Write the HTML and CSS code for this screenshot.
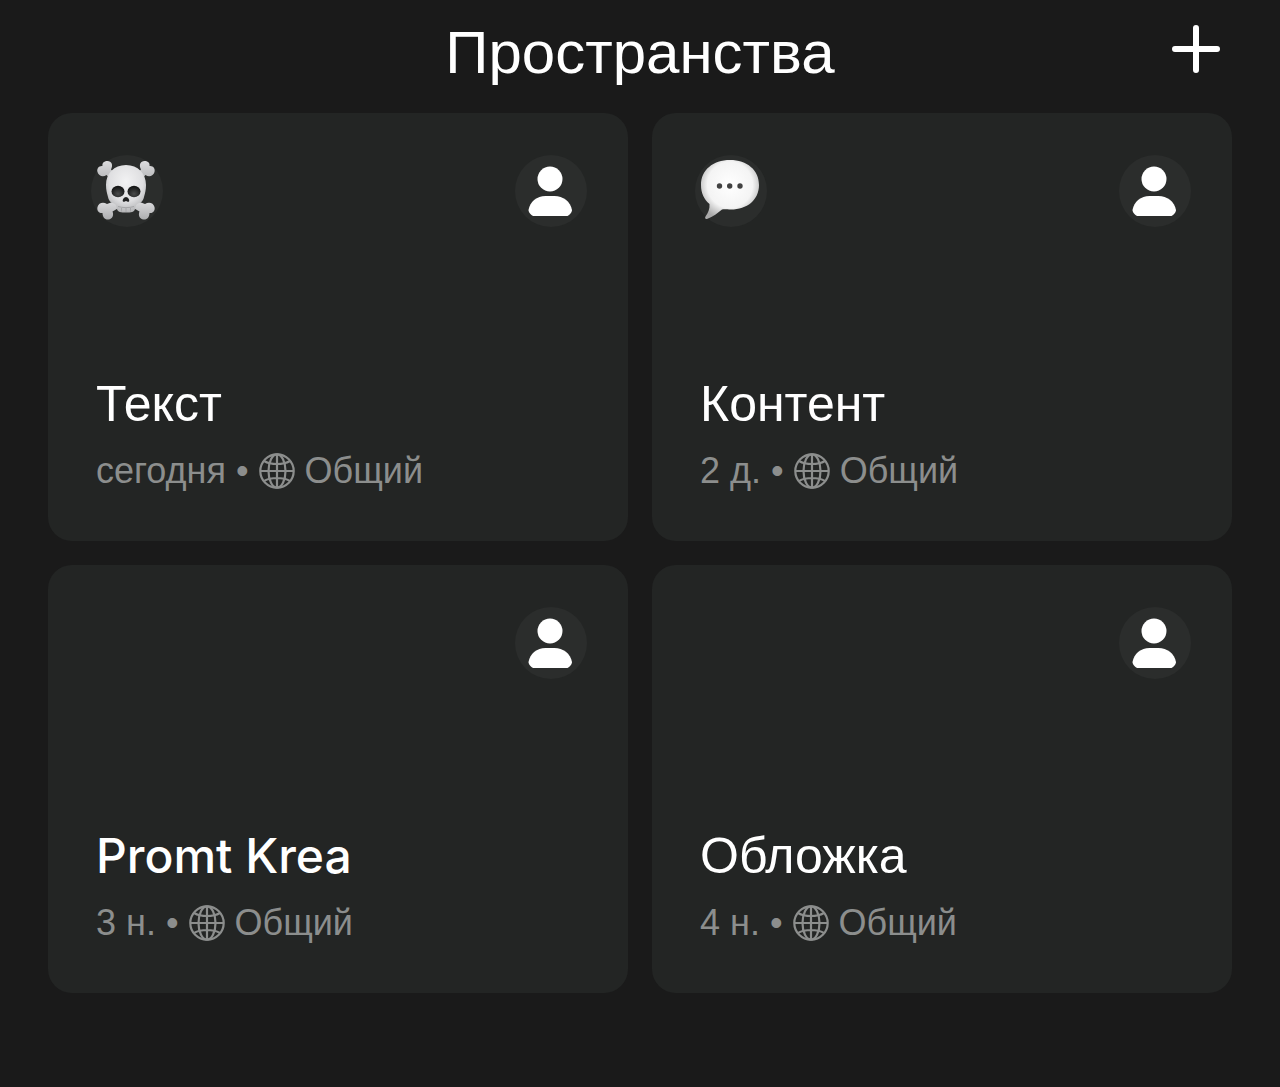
FILE: index.html
```html
<!DOCTYPE html>
<html lang="ru">
<head>
  <meta charset="UTF-8" />
  <meta name="viewport" content="width=device-width, initial-scale=1.0"/>
  <title>Пространства</title>
  <link rel="stylesheet" href="styles.css">
</head>
<body>

  <!-- Shared icons -->
  <svg class="sprite" aria-hidden="true">
    <symbol id="icon-user" viewBox="0 0 72 72">
      <circle cx="35" cy="24" r="12.500"/>
      <path d="M18 61C16 60 13.500 57.500 13.500 55C15 46.500 22 41 30.500 41h9C48 41 55.500 46.500 57 55C57 57.500 54.500 60 52.500 61z"/>
    </symbol>
    <symbol id="icon-globe" viewBox="0 0 36 36">
      <g fill="none" stroke="currentColor" stroke-width="2.200">
        <circle cx="18" cy="18" r="16.700"/>
        <ellipse cx="18" cy="18" rx="8.500" ry="16.700"/>
        <path d="M18 1v34M1 18h34M5 8C12 12 24 12 31 8M5 28C12 24 24 24 31 28"/>
      </g>
    </symbol>
  </svg>

  <header class="header">
    <h1>Пространства</h1>
    <button class="add-btn" type="button" aria-label="Добавить">
      <svg viewBox="0 0 48 48" width="48" height="48">
        <path d="M24 3v42M3 24h42" fill="none" stroke="currentColor" stroke-width="6" stroke-linecap="round"/>
      </svg>
    </button>
  </header>

  <main class="spaces">
    <!-- Text -->
    <a class="card" href="#text">
      <div class="card-top">
        <span class="badge">
          <svg viewBox="0 0 72 72">
            <defs>
              <radialGradient id="skull-fill" cx="0.5" cy="0.35" r="0.7">
                <stop offset="0" stop-color="#f2f2f3"/>
                <stop offset="0.6" stop-color="#dfdfe1"/>
                <stop offset="1" stop-color="#a9aaac"/>
              </radialGradient>
              <radialGradient id="eye-fill" cx="0.5" cy="0.7" r="0.6">
                <stop offset="0" stop-color="#4a4b4b"/>
                <stop offset="1" stop-color="#161717"/>
              </radialGradient>
              <linearGradient id="bone-fill" x1="0" y1="0" x2="0" y2="1">
                <stop offset="0" stop-color="#dcdcde"/>
                <stop offset="1" stop-color="#adaeb0"/>
              </linearGradient>
            </defs>
            <!-- Crossbones -->
            <g fill="url(#bone-fill)">
              <path id="bone-top" d="M28 23L20 14.500C22.500 10 20.500 6 16.500 6C12.500 6 11 8.500 11.500 11C8 10.500 5.500 13.500 6.500 17C7.500 21 12 22.500 15.500 20L24 29z"/>
              <path id="bone-bottom" d="M24 46L16 49C12 46.500 7.500 48 6.500 52C5.500 56 8.500 58.500 11.500 58C11.500 62 14 65 17.500 64.500C21.500 64 23 60 21.500 56.500L31 51z"/>
              <use href="#bone-top" transform="translate(70 0) scale(-1 1)"/>
              <use href="#bone-bottom" transform="translate(70 0) scale(-1 1)"/>
            </g>
            <path fill="url(#skull-fill)" d="M35 10C47 10 55 18.500 55 30C55 35 54 38 53 42C52 46 50.500 47.500 47 48.500C44.500 49.500 44.500 52 44 54C43.500 57 40 57.500 35 57.500C30 57.500 26.500 57 26 54C25.500 52 25.500 49.500 23 48.500C19.500 47.500 18 46 17 42C16 38 15 35 15 30C15 18.500 23 10 35 10z"/>
            <ellipse cx="27" cy="36.500" rx="6.500" ry="5.800" fill="url(#eye-fill)"/>
            <ellipse cx="43" cy="36.500" rx="6.500" ry="5.800" fill="url(#eye-fill)"/>
            <path fill="#202121" d="M35 42C37 42 39 45 38 46.500C37 47.500 36 46 35 46C34 46 33 47.500 32 46.500C31 45 33 42 35 42z"/>
            <path d="M27 51.500C32 53 38 53 43 51.500M30.500 53v3.500M35 53v4M39.500 53v3.500" fill="none" stroke="#a5a6a8"/>
          </svg>
        </span>
        <span class="badge"><svg><use href="#icon-user"/></svg></span>
      </div>
      <div class="card-info">
        <h2>Текст</h2>
        <p><span>сегодня</span><span>•</span><svg class="globe"><use href="#icon-globe"/></svg><span>Общий</span></p>
      </div>
    </a>

    <!-- Content -->
    <a class="card" href="#content">
      <div class="card-top">
        <span class="badge">
          <svg viewBox="0 0 72 72">
            <defs>
              <radialGradient id="bubble-fill" cx="0.5" cy="0.42" r="0.6">
                <stop offset="0" stop-color="#ffffff"/>
                <stop offset="0.65" stop-color="#f4f4f4"/>
                <stop offset="1" stop-color="#a9a9a9"/>
              </radialGradient>
            </defs>
            <path fill="url(#bubble-fill)" d="M35 5C52 5 64 15 64 30C64 45 52 54.500 36 54.500C32 54.500 29.500 54 27 54.500C23 57.500 18 62 12 64C10.500 64.500 9.500 63 10.500 61.500C13 58 15 54 14.500 49C9 44.500 6 38 6 30C6 15 18 5 35 5z"/>
            <g fill="#424242">
              <circle cx="24.500" cy="31" r="2.700"/>
              <circle cx="34.700" cy="31" r="2.700"/>
              <circle cx="45" cy="31" r="2.700"/>
            </g>
          </svg>
        </span>
        <span class="badge"><svg><use href="#icon-user"/></svg></span>
      </div>
      <div class="card-info">
        <h2>Контент</h2>
        <p><span>2 д.</span><span>•</span><svg class="globe"><use href="#icon-globe"/></svg><span>Общий</span></p>
      </div>
    </a>

    <!-- Promt Krea -->
    <a class="card" href="#promt-krea">
      <div class="card-top">
        <span class="badge"><svg><use href="#icon-user"/></svg></span>
      </div>
      <div class="card-info">
        <h2 class="latin">Promt Krea</h2>
        <p><span>3 н.</span><span>•</span><svg class="globe"><use href="#icon-globe"/></svg><span>Общий</span></p>
      </div>
    </a>

    <!-- Cover -->
    <a class="card" href="#cover">
      <div class="card-top">
        <span class="badge"><svg><use href="#icon-user"/></svg></span>
      </div>
      <div class="card-info">
        <h2>Обложка</h2>
        <p><span>4 н.</span><span>•</span><svg class="globe"><use href="#icon-globe"/></svg><span>Общий</span></p>
      </div>
    </a>
  </main>

</body>
</html>
```
FILE: styles.css
```css
* {
  box-sizing: border-box;
}

body {
  margin: 0;
  font-family: "Liberation Sans", Arial, sans-serif;
  background-color: #1a1a1a;
  color: #fff;
}

h1,
h2,
p {
  margin: 0;
  font-weight: 400;
}

.sprite {
  display: none;
}

.header {
  display: grid;
  grid-template-columns: 1fr auto 1fr;
  align-items: start;
  padding: 16px 48px 23px;
}

.header h1 {
  grid-column: 2;
  font-size: 60px;
  line-height: 74px;
}

.add-btn {
  justify-self: end;
  display: flex;
  align-items: center;
  justify-content: center;
  width: 72px;
  height: 66px;
  padding: 0;
  border: none;
  background: none;
  color: #fff;
  cursor: pointer;
}

.spaces {
  display: grid;
  grid-template-columns: 1fr 1fr;
  gap: 24px;
  padding: 0 48px 48px;
}

.card {
  display: flex;
  flex-direction: column;
  justify-content: space-between;
  min-height: 428px;
  padding: 42px 41px 46px 43px;
  border-radius: 24px;
  background-color: #232524;
  color: #fff;
  text-decoration: none;
}

.card-top {
  display: flex;
  justify-content: space-between;
}

.badge {
  width: 72px;
  height: 72px;
  border-radius: 50%;
  background-color: #2b2d2c;
}

.badge:last-child {
  margin-left: auto;
}

.badge svg {
  display: block;
  width: 100%;
  height: 100%;
  fill: #fff;
}

.card-info {
  display: flex;
  flex-direction: column;
  gap: 12px;
  padding: 0 5px;
}

.card-info h2 {
  font-size: 50px;
  line-height: 62px;
}

.card-info .latin {
  font-family: Inter, "Liberation Sans", sans-serif;
  font-size: 48px;
  font-weight: 500;
}

.card-info p {
  display: flex;
  align-items: center;
  gap: 10px;
  font-size: 36px;
  line-height: 48px;
  color: #8c8e8d;
}

.globe {
  width: 36px;
  height: 36px;
}
```
